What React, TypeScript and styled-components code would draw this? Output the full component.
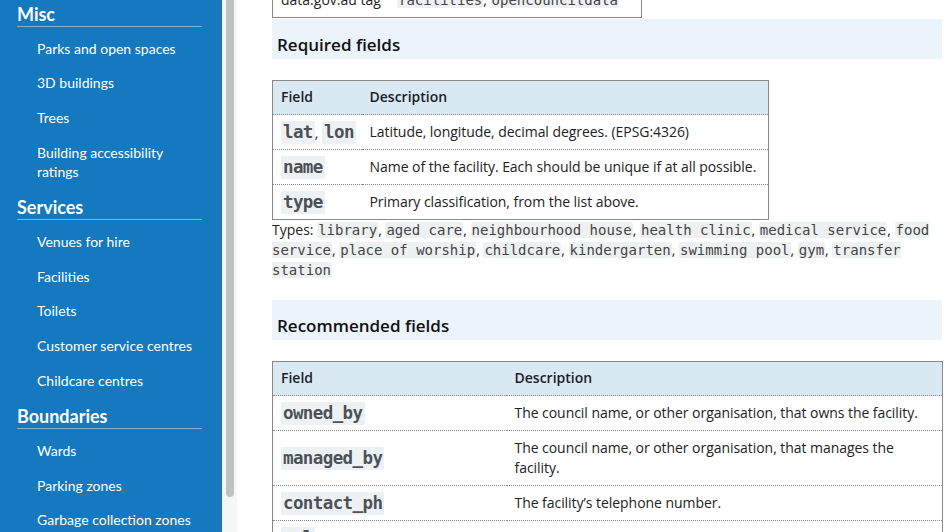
import { createGlobalStyle, styled } from 'styled-components';

type Field = {
  codes: string[];
  description: string;
};

const SIDEBAR = [
  {
    title: 'Misc',
    items: ['Parks and open spaces', '3D buildings', 'Trees', 'Building accessibility ratings'],
  },
  {
    title: 'Services',
    items: ['Venues for hire', 'Facilities', 'Toilets', 'Customer service centres', 'Childcare centres'],
  },
  {
    title: 'Boundaries',
    items: ['Wards', 'Parking zones', 'Garbage collection zones'],
  },
];

const REQUIRED: Field[] = [
  { codes: ['lat', 'lon'], description: 'Latitude, longitude, decimal degrees. (EPSG:4326)' },
  { codes: ['name'], description: 'Name of the facility. Each should be unique if at all possible.' },
  { codes: ['type'], description: 'Primary classification, from the list above.' },
];

const TYPES = [
  'library',
  'aged care',
  'neighbourhood house',
  'health clinic',
  'medical service',
  'food service',
  'place of worship',
  'childcare',
  'kindergarten',
  'swimming pool',
  'gym',
  'transfer station',
];

const RECOMMENDED: Field[] = [
  { codes: ['owned_by'], description: 'The council name, or other organisation, that owns the facility.' },
  { codes: ['managed_by'], description: 'The council name, or other organisation, that manages the facility.' },
  { codes: ['contact_ph'], description: 'The facility’s telephone number.' },
  { codes: ['url'], description: 'The facility’s web page.' },
];

const GlobalStyle = createGlobalStyle`
  html, body {
    margin: 0;
    padding: 0;
    height: 100%;
    overflow: hidden;
    background: #fff;
  }
  body {
    font-family: 'Open Sans', 'Liberation Sans', sans-serif;
    color: #222;
  }
`;

const App = () => {
  return (
    <>
      <GlobalStyle />
      <Page>
        <Sidebar>
          {SIDEBAR.map(section => (
            <SideSection key={section.title}>
              <SideTitle>{section.title}</SideTitle>
              <SideList>
                {section.items.map(item => (
                  <SideItem key={item}>{item}</SideItem>
                ))}
              </SideList>
            </SideSection>
          ))}
        </Sidebar>
        <ScrollTrack>
          <ScrollThumb />
        </ScrollTrack>
        <Main>
          <TopTable>
            <tbody>
              <tr>
                <TagLabel>data.gov.au tag</TagLabel>
                <TagCell>
                  <InlineCode>facilities</InlineCode>, <InlineCode>opencouncildata</InlineCode>
                </TagCell>
              </tr>
            </tbody>
          </TopTable>

          <SectionBand>Required fields</SectionBand>
          <FieldTable $fieldWidth={90}>
            <thead>
              <tr>
                <HeadCell>Field</HeadCell>
                <HeadCell>Description</HeadCell>
              </tr>
            </thead>
            <tbody>
              {REQUIRED.map(row => (
                <tr key={row.codes.join()}>
                  <FieldCell>
                    {row.codes.map((code, i) => (
                      <span key={code}>
                        {i > 0 && ', '}
                        <FieldCode>{code}</FieldCode>
                      </span>
                    ))}
                  </FieldCell>
                  <DescCell>{row.description}</DescCell>
                </tr>
              ))}
            </tbody>
          </FieldTable>
          <TypesText>
            Types:{' '}
            {TYPES.map((type, i) => (
              <span key={type}>
                <InlineCode>{type}</InlineCode>
                {i < TYPES.length - 1 && ', '}
              </span>
            ))}
          </TypesText>

          <SectionBand>Recommended fields</SectionBand>
          <FieldTable $fieldWidth={235} $wide>
            <thead>
              <tr>
                <HeadCell>Field</HeadCell>
                <HeadCell>Description</HeadCell>
              </tr>
            </thead>
            <tbody>
              {RECOMMENDED.map(row => (
                <tr key={row.codes.join()}>
                  <FieldCell>
                    <FieldCode>{row.codes[0]}</FieldCode>
                  </FieldCell>
                  <DescCell>{row.description}</DescCell>
                </tr>
              ))}
            </tbody>
          </FieldTable>
        </Main>
      </Page>
    </>
  );
};

export default App;

const Page = styled.div`
  display: flex;
  width: 947px;
  height: 532px;
  overflow: hidden;
`;

const Sidebar = styled.nav`
  flex: 0 0 222px;
  box-sizing: border-box;
  background: #1479be;
  padding: 3px 20px 0 17px;
  font-family: Lato, 'Open Sans', sans-serif;
  color: #fff;
  overflow: hidden;
`;

const SideSection = styled.div`
  margin-bottom: 8px;
`;

const SideTitle = styled.div`
  font-size: 18px;
  font-weight: 700;
  line-height: 22px;
  padding-bottom: 1px;
  border-bottom: 1px solid #7cb2dc;
`;

const SideList = styled.ul`
  list-style: none;
  margin: 0;
  padding: 4px 0 0 20px;
`;

const SideItem = styled.li`
  font-size: 14px;
  line-height: 19px;
  padding: 7.8px 0 7.8px;
`;

const ScrollTrack = styled.div`
  flex: 0 0 15px;
  background: #f6f6f6;
  border-left: 1px solid #ececec;
  box-sizing: border-box;
  padding: 0 3px 0 3px;
`;

const ScrollThumb = styled.div`
  height: 497px;
  background: #c1c1c1;
  border-radius: 0 0 4px 4px;
`;

const Main = styled.main`
  flex: 1;
  padding-left: 35px;
  padding-right: 5px;
  overflow: hidden;
`;

const TopTable = styled.table`
  border-collapse: collapse;
  border: 1px solid #888;
  width: 370px;
  margin-top: -19px;
  font-size: 14px;
`;

const TagLabel = styled.td`
  padding: 8px 8px;
  height: 19px;
  white-space: nowrap;
  width: 100px;
`;

const TagCell = styled.td`
  padding: 8px 8px;
`;

const InlineCode = styled.code`
  font-family: 'DejaVu Sans Mono', monospace;
  font-size: 14px;
  color: #444;
  background: #eef1f2;
  border-radius: 2px;
  padding: 0 1px;
`;

const SectionBand = styled.h2`
  margin: 1px 0 0;
  background: #ebf3fb;
  font-size: 17px;
  font-weight: 600;
  color: #111;
  line-height: 24px;
  padding: 14px 5px 2px;
`;

const FieldTable = styled.table<{ $fieldWidth: number; $wide?: boolean }>`
  border-collapse: collapse;
  table-layout: fixed;
  border: 1px solid #888;
  margin-top: 21px;
  width: ${props => (props.$wide ? '671px' : '497px')};
  font-size: 14px;
  line-height: 20px;

  & th,
  & td {
    box-sizing: border-box;
  }

  & th:first-child {
    width: ${props => props.$fieldWidth - 1}px;
  }
`;

const HeadCell = styled.th`
  background: #d9e9f2;
  text-align: left;
  font-weight: 600;
  color: #1d1d2b;
  padding: 6px 8px 7px;
  border-bottom: 1px dotted #888;
`;

const FieldCell = styled.td`
  padding: 6px 8px 5px;
  border-bottom: 1px dotted #888;
  white-space: nowrap;
  vertical-align: middle;
`;

const DescCell = styled.td`
  padding: 7px 6px 7px 8px;
  border-bottom: 1px dotted #888;
  vertical-align: middle;
  letter-spacing: -0.05px;
`;

const FieldCode = styled.code`
  display: inline-block;
  font-family: 'DejaVu Sans Mono', monospace;
  font-size: 17.5px;
  font-weight: 700;
  line-height: 23px;
  color: #4b5257;
  background: #eef1f3;
  border-radius: 2px;
  padding: 0 2px;
  letter-spacing: -0.6px;
`;

const TypesText = styled.p`
  margin: 0 0 20px;
  font-size: 14px;
  line-height: 20px;
  width: 670px;
`;
